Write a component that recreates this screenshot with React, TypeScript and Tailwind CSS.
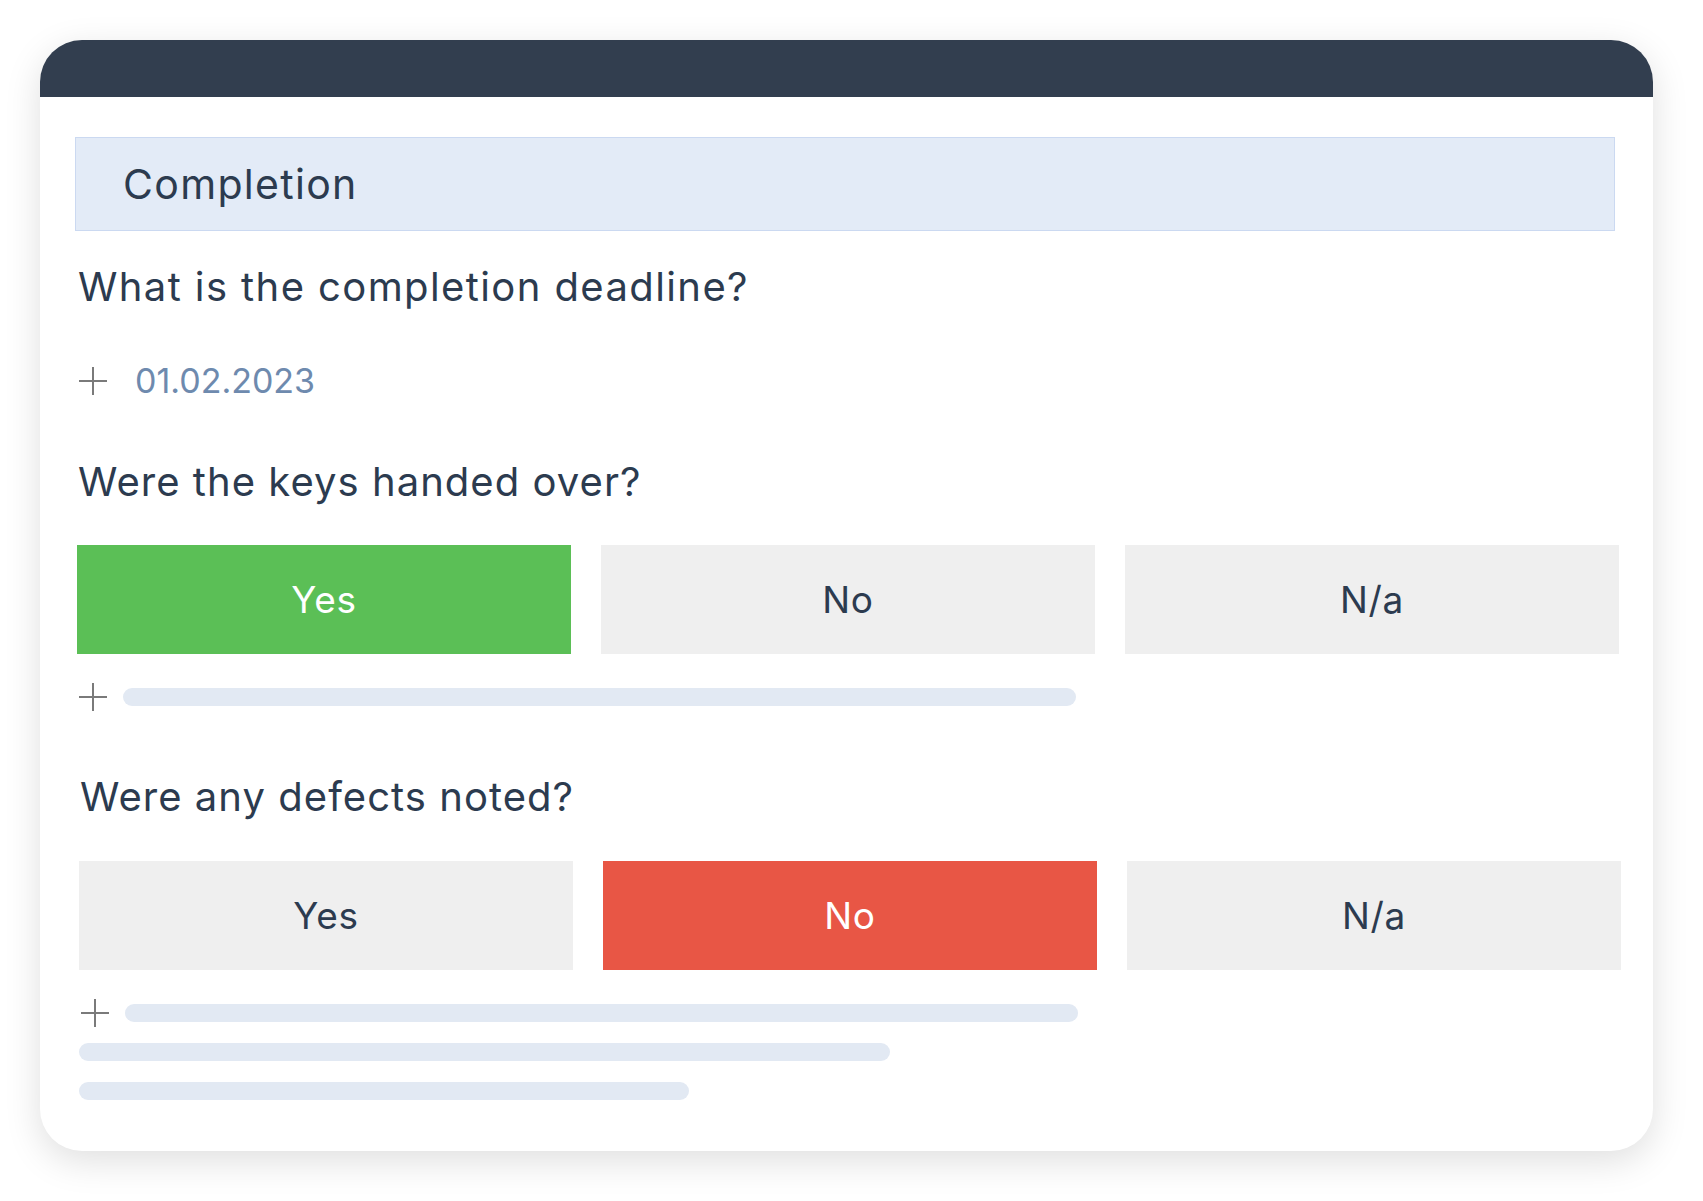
import React from "react";

const font = { fontFamily: "Inter, 'Noto Sans', sans-serif" };

function Plus() {
  return (
    <svg width="28" height="28" viewBox="0 0 28 28" className="shrink-0">
      <line x1="14" y1="0" x2="14" y2="28" stroke="#7a7a7a" strokeWidth="2" />
      <line x1="0" y1="14" x2="28" y2="14" stroke="#7a7a7a" strokeWidth="2" />
    </svg>
  );
}

type Choice = "Yes" | "No" | "N/a";

function Choices({ value, tone }: { value: Choice; tone: "green" | "red" }) {
  const options: Choice[] = ["Yes", "No", "N/a"];
  return (
    <div className="flex gap-[30px]">
      {options.map((o) => {
        const active = o === value;
        const cls = active
          ? tone === "green"
            ? "bg-[#5bbf56] text-white"
            : "bg-[#e85645] text-white"
          : "bg-[#efefef] text-[#2c3b4f]";
        return (
          <div
            key={o}
            className={`w-[494px] h-[109px] flex items-center justify-center text-[37px] leading-[44px] tracking-[0.02em] ${cls}`}
          >
            {o}
          </div>
        );
      })}
    </div>
  );
}

export default function App() {
  return (
    <div className="min-h-screen bg-white p-[40px]" style={font}>
      <div className="w-[1613px] h-[1111px] bg-white rounded-[42px] overflow-hidden shadow-[0_10px_36px_rgba(0,0,0,0.13)]">
        {/* top bar */}
        <div className="h-[57px] bg-[#323e4f]" />

        <div className="pl-[35px] pr-[30px] pt-[40px]">
          {/* section title */}
          <div className="h-[94px] mr-[8px] flex items-center pl-[47px] bg-[#e3ebf7] border border-[#cbd9f1]">
            <span className="text-[41px] leading-[48px] tracking-[0.032em] text-[#2c3b4f]">Completion</span>
          </div>

          {/* deadline */}
          <div className="mt-[32px] pl-[3px] text-[40px] leading-[48px] tracking-[0.035em] text-[#2c3b4f]">
            What is the completion deadline?
          </div>
          <div className="mt-[46px] h-[48px] pl-[4px] flex items-center gap-[28px]">
            <Plus />
            <span className="text-[34px] leading-[48px] text-[#6e8aae]">01.02.2023</span>
          </div>

          {/* keys */}
          <div className="mt-[53px] pl-[3px] text-[40px] leading-[48px] tracking-[0.026em] text-[#2c3b4f]">
            Were the keys handed over?
          </div>
          <div className="mt-[39px] ml-[2px]">
            <Choices value="Yes" tone="green" />
          </div>
          <div className="mt-[29px] h-[28px] pl-[4px] flex items-center gap-[16px]">
            <Plus />
            <div className="w-[953px] h-[18px] rounded-full bg-[#e2e9f3]" />
          </div>

          {/* defects */}
          <div className="mt-[62px] pl-[5px] text-[40px] leading-[48px] tracking-[0.026em] text-[#2c3b4f]">
            Were any defects noted?
          </div>
          <div className="mt-[40px] ml-[4px]">
            <Choices value="No" tone="red" />
          </div>
          <div className="mt-[29px] h-[28px] pl-[6px] flex items-center gap-[16px]">
            <Plus />
            <div className="w-[953px] h-[18px] rounded-full bg-[#e2e9f3]" />
          </div>
          <div className="mt-[16px] ml-[4px] w-[811px] h-[18px] rounded-full bg-[#e2e9f3]" />
          <div className="mt-[21px] ml-[4px] w-[610px] h-[18px] rounded-full bg-[#e2e9f3]" />
        </div>
      </div>
    </div>
  );
}
